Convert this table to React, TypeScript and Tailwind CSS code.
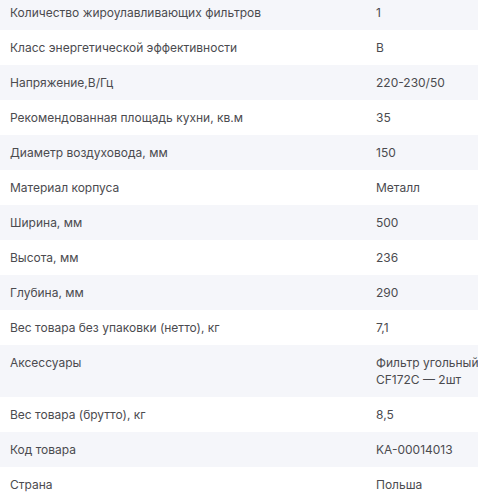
import React from "react";

interface Spec {
  label: string;
  value: string;
}

const specs: Spec[] = [
  { label: "Количество жироулавливающих фильтров", value: "1" },
  { label: "Класс энергетической эффективности", value: "B" },
  { label: "Напряжение,В/Гц", value: "220-230/50" },
  { label: "Рекомендованная площадь кухни, кв.м", value: "35" },
  { label: "Диаметр воздуховода, мм", value: "150" },
  { label: "Материал корпуса", value: "Металл" },
  { label: "Ширина, мм", value: "500" },
  { label: "Высота, мм", value: "236" },
  { label: "Глубина, мм", value: "290" },
  { label: "Вес товара без упаковки (нетто), кг", value: "7,1" },
  { label: "Аксессуары", value: "Фильтр угольный\nCF172C — 2шт" },
  { label: "Вес товара (брутто), кг", value: "8,5" },
  { label: "Код товара", value: "KA-00014013" },
  { label: "Страна", value: "Польша" },
];

const App: React.FC = () => {
  return (
    <div className="w-[478px] h-[500px] overflow-hidden bg-white font-['Inter',sans-serif] text-xs leading-[17px] text-[#4b4b4f]">
      <div className="-mt-[5px] flex flex-col">
        {specs.map((s, i) => (
          <div
            key={s.label}
            className={
              "flex items-start py-[9px] " +
              (i % 2 === 0 ? "bg-[#f5f6fa]" : "bg-white")
            }
          >
            <div className="w-[376px] pl-[10px] pr-4 shrink-0">{s.label}</div>
            <div className="flex-1 whitespace-pre">{s.value}</div>
          </div>
        ))}
      </div>
    </div>
  );
};

export default App;
